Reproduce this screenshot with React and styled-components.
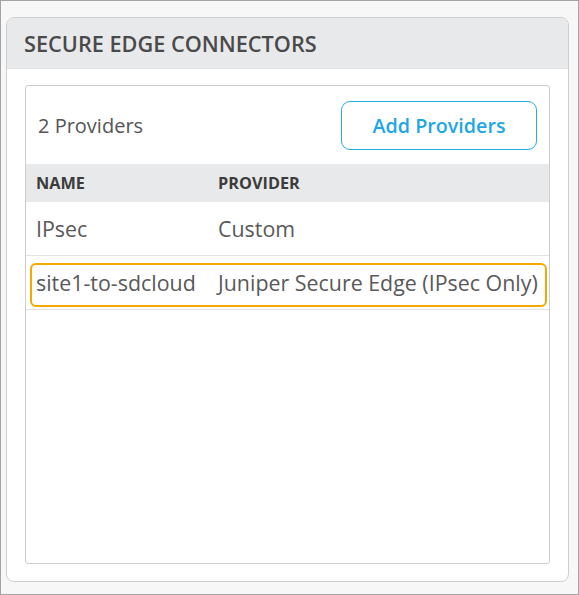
import React from 'react'
import styled, { createGlobalStyle } from 'styled-components'

const GlobalStyle = createGlobalStyle`
  html, body {
    margin: 0;
    padding: 0;
  }
  body {
    font-family: "Open Sans", "Liberation Sans", sans-serif;
    background: #ffffff;
  }
`;

const Frame = styled.div`
  box-sizing: border-box;
  width: 579px;
  height: 595px;
  border: 1px solid #a3a3a3;
  background: #f7f7f7;
  padding: 16px 9px 12px 5px;
  display: flex;
`;

const Card = styled.section`
  flex: 1;
  display: flex;
  flex-direction: column;
  background: #fff;
  border: 1px solid #cfcfcf;
  border-radius: 8px;
  overflow: hidden;
`;

const CardHeader = styled.header`
  height: 50px;
  display: flex;
  align-items: center;
  padding-left: 17px;
  background: #e8e9eb;
  border-bottom: 1px solid #e2e3e5;
`;

const Title = styled.h2`
  margin: 0;
  font-size: 21.7px;
  font-weight: 600;
  color: #4a4a4a;
`;

const CardBody = styled.div`
  flex: 1;
  display: flex;
  padding: 16px 18px 17px 18px;
`;

const Panel = styled.div`
  flex: 1;
  display: flex;
  flex-direction: column;
  border: 1px solid #cdcdcd;
  border-radius: 3px;
`;

const Toolbar = styled.div`
  height: 78px;
  display: flex;
  align-items: center;
  justify-content: space-between;
  padding: 0 12px 0 12px;
`;

const Count = styled.span`
  font-size: 20px;
  color: #555;
`;

const OutlineButton = styled.button`
  box-sizing: border-box;
  width: 196px;
  height: 49px;
  border: 1px solid #2aaae6;
  border-radius: 9px;
  background: #fff;
  color: #1ea6e6;
  font-family: inherit;
  font-size: 19.7px;
  font-weight: 600;
  cursor: pointer;
`;

const Table = styled.div`
  display: flex;
  flex-direction: column;
`;

const Row = styled.div`
  position: relative;
  display: grid;
  grid-template-columns: 182px 1fr;
  align-items: center;
  height: ${p => (p.$head ? '38px' : '53px')};
  background: ${p => (p.$head ? '#e8e9eb' : '#fff')};
  border-bottom: ${p => (p.$head ? 'none' : '1px solid #e3e3e3')};
`;

const HeadCell = styled.div`
  padding-left: 10px;
  font-size: 16.3px;
  font-weight: 700;
  color: #3c3c3c;
`;

const Cell = styled.div`
  padding-left: 10px;
  font-size: 21.4px;
  color: #595959;
  white-space: nowrap;
`;

const Highlight = styled.div`
  position: absolute;
  left: 4px;
  right: 2px;
  top: 7px;
  bottom: 2px;
  border: 2.5px solid #f5a800;
  border-radius: 6px;
  pointer-events: none;
`;

const connectors = [
  { name: 'IPsec', provider: 'Custom' },
  { name: 'site1-to-sdcloud', provider: 'Juniper Secure Edge (IPsec Only)', highlighted: true },
];

export default function App() {
  return (
    <>
      <GlobalStyle />
      <Frame>
        <Card>
          <CardHeader>
            <Title>SECURE EDGE CONNECTORS</Title>
          </CardHeader>
          <CardBody>
            <Panel>
              <Toolbar>
                <Count>{connectors.length} Providers</Count>
                <OutlineButton>Add Providers</OutlineButton>
              </Toolbar>
              <Table>
                <Row $head>
                  <HeadCell>NAME</HeadCell>
                  <HeadCell>PROVIDER</HeadCell>
                </Row>
                {connectors.map(c => (
                  <Row key={c.name}>
                    <Cell>{c.name}</Cell>
                    <Cell>{c.provider}</Cell>
                    {c.highlighted && <Highlight />}
                  </Row>
                ))}
              </Table>
            </Panel>
          </CardBody>
        </Card>
      </Frame>
    </>
  )
}
